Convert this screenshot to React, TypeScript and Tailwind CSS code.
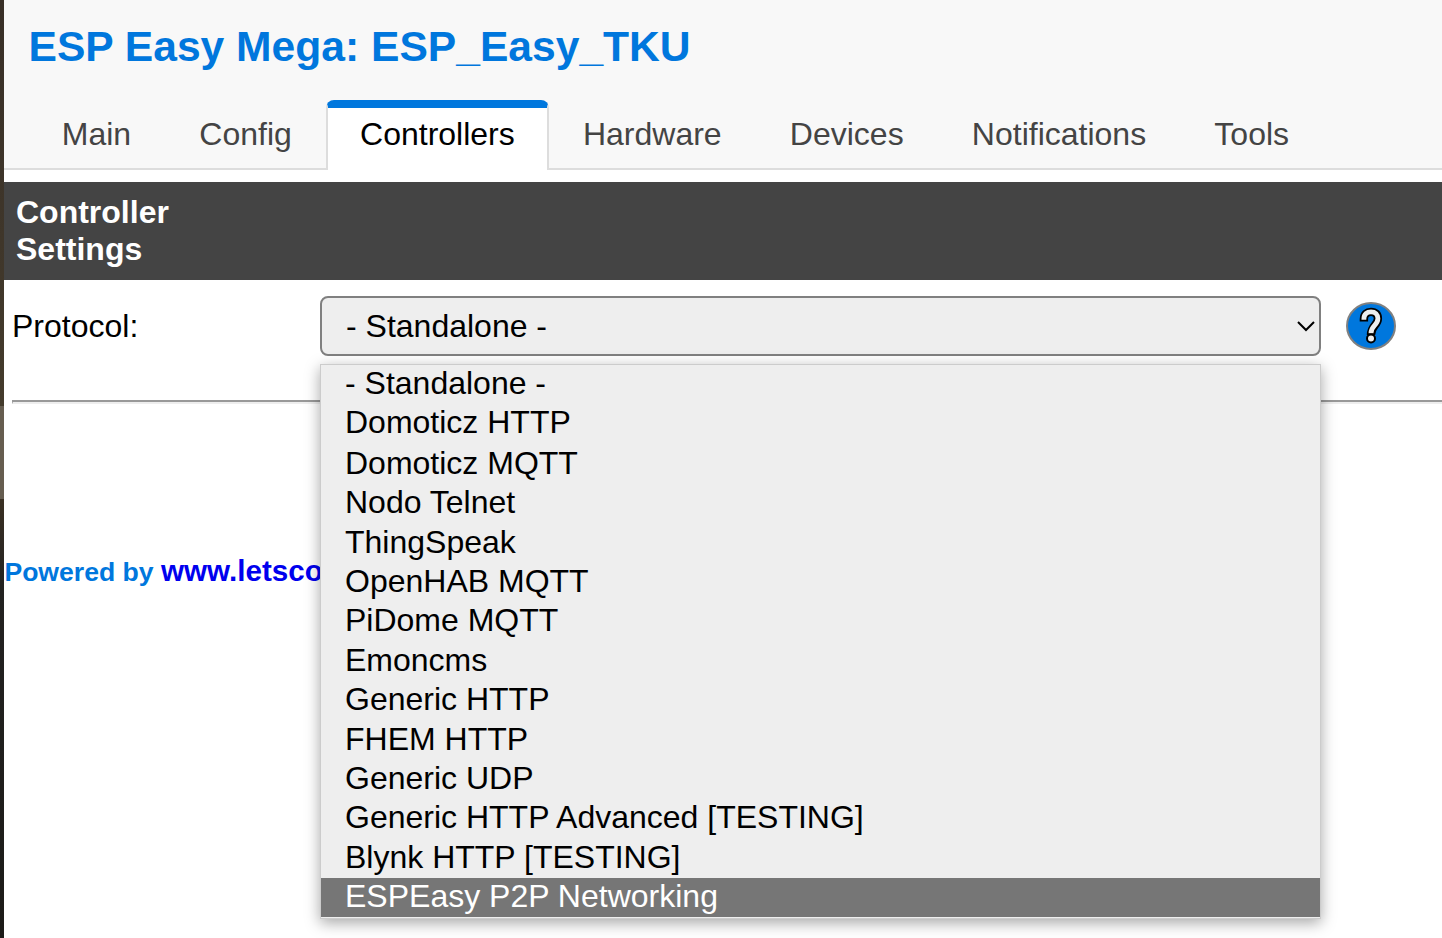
const tabs = ["Main", "Config", "Controllers", "Hardware", "Devices", "Notifications", "Tools"];

const protocols = [
  { name: "- Standalone -", height: "h-[39px]" },
  { name: "Domoticz HTTP", height: "h-[41px]" },
  { name: "Domoticz MQTT", height: "h-[39px]" },
  { name: "Nodo Telnet", height: "h-[40px]" },
  { name: "ThingSpeak", height: "h-[39px]" },
  { name: "OpenHAB MQTT", height: "h-[39px]" },
  { name: "PiDome MQTT", height: "h-[40px]" },
  { name: "Emoncms", height: "h-[39px]" },
  { name: "Generic HTTP", height: "h-[40px]" },
  { name: "FHEM HTTP", height: "h-[39px]" },
  { name: "Generic UDP", height: "h-[39px]" },
  { name: "Generic HTTP Advanced [TESTING]", height: "h-[40px]" },
  { name: "Blynk HTTP [TESTING]", height: "h-[39px]" },
  { name: "ESPEasy P2P Networking", height: "h-[39px] bg-[#767676] text-white" },
];

function Header() {
  return (
    <header className="h-[170px] border-b-2 border-[#dddddd] bg-[#f8f8f8]">
      <h1 className="h-[100px] pt-[21px] pl-[24.5px] text-[42.6px] leading-[50px] font-bold whitespace-nowrap text-[#0077dd]">
        ESP Easy Mega: ESP_Easy_TKU
      </h1>
      <nav className="flex h-[70px] gap-[0.2px] pl-[23.8px]">
        {tabs.map((tab) =>
          tab === "Controllers" ? (
            <a key={tab} className="h-[70px] rounded-t-lg border-x-2 border-t-8 border-x-[#dddddd] border-t-[#0077dd] bg-white px-8 pt-2 leading-[37px] text-black">
              {tab}
            </a>
          ) : (
            <a key={tab} className="h-[68px] border-x-2 border-t-8 border-transparent px-8 pt-2 leading-[37px] text-[#444444]">
              {tab}
            </a>
          ),
        )}
      </nav>
    </header>
  );
}

function HelpIcon() {
  return (
    <svg width="50" height="48" viewBox="0 0 50 48" className="ml-[25px] shrink-0">
      <ellipse cx="25" cy="24" rx="24" ry="23" fill="#0077dd" stroke="#808080" strokeWidth="2" />
      <g fill="none" strokeLinecap="butt">
        <path d="M17.9 19.4 V17 C17.9 12 21 9.9 25 9.9 C29.3 9.9 31.9 12.3 31.9 16.6 C31.9 23.5 25 23.5 25 33" stroke="#000" strokeWidth="8.4" />
        <path d="M17.9 17.7 V17 C17.9 12 21 9.9 25 9.9 C29.3 9.9 31.9 12.3 31.9 16.6 C31.9 23.5 25 23.5 25 31.2" stroke="#eeeeee" strokeWidth="4.8" />
      </g>
      <circle cx="25" cy="36.5" r="4" fill="#eeeeee" stroke="#000" strokeWidth="2" />
    </svg>
  );
}

function ProtocolSelect() {
  return (
    <div className="relative w-[1001px] shrink-0">
      <button className="flex h-[60px] w-full items-center justify-between rounded-lg border-2 border-[#808080] bg-[#eeeeee] pr-1 pl-6">
        <span>- Standalone -</span>
        <svg width="18" height="12" viewBox="0 0 18 12" fill="none" stroke="#000" strokeWidth="2">
          <path d="M1 2 L9 10 L17 2" />
        </svg>
      </button>
      <ul className="absolute top-[68px] left-0 w-[1001px] border border-[#cccccc] bg-[#eeeeee] pb-px leading-[37px] shadow-[0_4px_14px_rgba(0,0,0,0.35)]">
        {protocols.map(({ name, height }) => (
          <li key={name} className={`pl-6 ${height}`}>
            {name}
          </li>
        ))}
      </ul>
    </div>
  );
}

export default function App() {
  return (
    <div className="flex h-[938px] w-[1442px] overflow-hidden bg-white font-['Liberation_Sans',Arial,sans-serif] text-[32px] text-black">
      <div className="flex w-1 shrink-0 flex-col">
        <div className="h-[406px] bg-linear-to-b from-[#382f27] to-[#443b2c]" />
        <div className="h-[93px] bg-[#665d50]" />
        <div className="flex-1 bg-linear-to-b from-[#3a3023] via-[#232221] via-20% to-[#1c1b18]" />
      </div>
      <main className="min-w-0 flex-1">
        <Header />
        <h2 className="mt-3 h-[98px] bg-[#444444] py-3 pl-3 leading-[37px] font-bold text-white">
          Controller
          <br />
          Settings
        </h2>
        <div className="flex h-[92px] items-center">
          <span className="w-[316px] shrink-0 pl-2">Protocol:</span>
          <ProtocolSelect />
          <HelpIcon />
        </div>
        <div className="mt-7 ml-2 h-1 border-t-2 border-b-2 border-l border-t-[#999999] border-b-[#eeeeee] border-l-[#999999]" />
        <footer className="mt-[149px] pl-[0.4px] text-[26.6px] leading-[36px] font-bold whitespace-nowrap text-[#0077dd]">
          Powered by <a className="text-[29.6px] text-[#0000ee]">www.letsco</a>
        </footer>
      </main>
    </div>
  );
}
